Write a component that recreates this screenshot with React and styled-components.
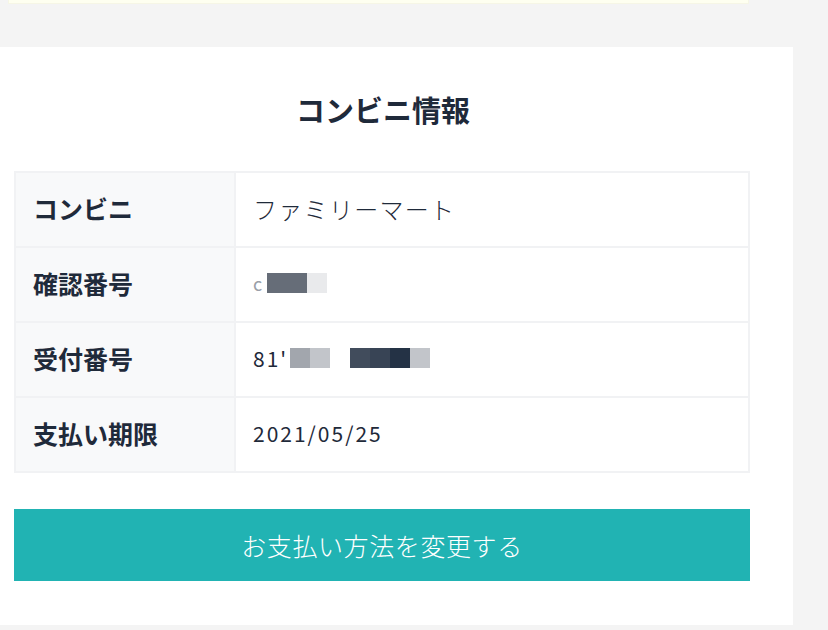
import React from "react";
import styled, { createGlobalStyle } from "styled-components";

const Global = createGlobalStyle`
  html, body { margin: 0; padding: 0; background: #f4f4f4; }
  body { font-family: "Noto Sans CJK JP", "Noto Sans", sans-serif; color: #1f2a3a; }
`;

const Page = styled.div`
  width: 828px;
  height: 630px;
  overflow: hidden;
  display: flex;
  flex-direction: column;
`;

const Notice = styled.div`
  margin-left: 8px;
  width: 741px;
  height: 4px;
  background: #fefff0;
  border: 1px solid #f6f6e6;
  border-top: none;
  box-sizing: border-box;
`;

const Card = styled.section`
  margin-top: 43px;
  width: 793px;
  box-sizing: border-box;
  background: #ffffff;
  padding: 42px 43px 44px 14px;
  display: flex;
  flex-direction: column;
`;

const Title = styled.h2`
  margin: 0;
  height: 40px;
  line-height: 40px;
  text-align: center;
  font-size: 29px;
  font-weight: 700;
  color: #1f2a3a;
  padding-left: 2px;
`;

const Table = styled.div`
  margin-top: 42px;
  display: grid;
  grid-template-columns: 220px 1fr;
  border: 2px solid #f1f2f4;
  border-bottom: none;
`;

const Label = styled.div`
  height: 73px;
  background: #f8f9fa;
  border-bottom: 2px solid #f1f2f4;
  border-right: 2px solid #f1f2f4;
  display: flex;
  align-items: center;
  padding-left: 17px;
  padding-bottom: 3px;
  box-sizing: border-box;
  height: 75px;
  font-size: 25px;
  font-weight: 700;
  color: #1f2a3a;
`;

const Value = styled.div`
  height: 75px;
  box-sizing: border-box;
  padding-bottom: 3px;
  border-bottom: 2px solid #f1f2f4;
  display: flex;
  align-items: center;
  padding-left: 17px;
  font-size: ${(p) => (p.$num ? "21px" : "24px")};
  letter-spacing: ${(p) => (p.$num ? "2px" : "1.3px")};
  font-weight: ${(p) => (p.$light ? 300 : 400)};
  color: #1f2a3a;
`;

const Mask = styled.span`
  display: inline-block;
  width: ${(p) => p.$w || 20}px;
  height: 20px;
  background: ${(p) => p.$c};
  margin-left: ${(p) => p.$ml || 0}px;
`;

const Faint = styled.span`
  color: #9aa0a8;
  font-size: 18px;
`;

const Button = styled.button`
  margin-top: 36px;
  height: 72px;
  border: none;
  background: #21b3b3;
  color: #ffffff;
  font-family: "Noto Sans CJK JP", sans-serif;
  font-size: 25px;
  font-weight: 300;
  letter-spacing: 0.6px;
  cursor: pointer;
`;

export default function App() {
  return (
    <Page>
      <Global />
      <Notice />
      <Card>
        <Title>コンビニ情報</Title>
        <Table>
          <Label>コンビニ</Label>
          <Value $light>ファミリーマート</Value>
          <Label>確認番号</Label>
          <Value>
            <Faint>c</Faint>
            <Mask $w={40} $c="#666d78" $ml={4} />
            <Mask $w={20} $c="#e9eaec" />
          </Value>
          <Label>受付番号</Label>
          <Value $num>
            81'
            <Mask $c="#a2a6ad" $ml={2} />
            <Mask $c="#c2c5ca" />
            <Mask $c="#414c5c" $ml={20} />
            <Mask $c="#384455" />
            <Mask $c="#243245" />
            <Mask $c="#c2c5ca" />
          </Value>
          <Label>支払い期限</Label>
          <Value $num>2021/05/25</Value>
        </Table>
        <Button>お支払い方法を変更する</Button>
      </Card>
    </Page>
  );
}
